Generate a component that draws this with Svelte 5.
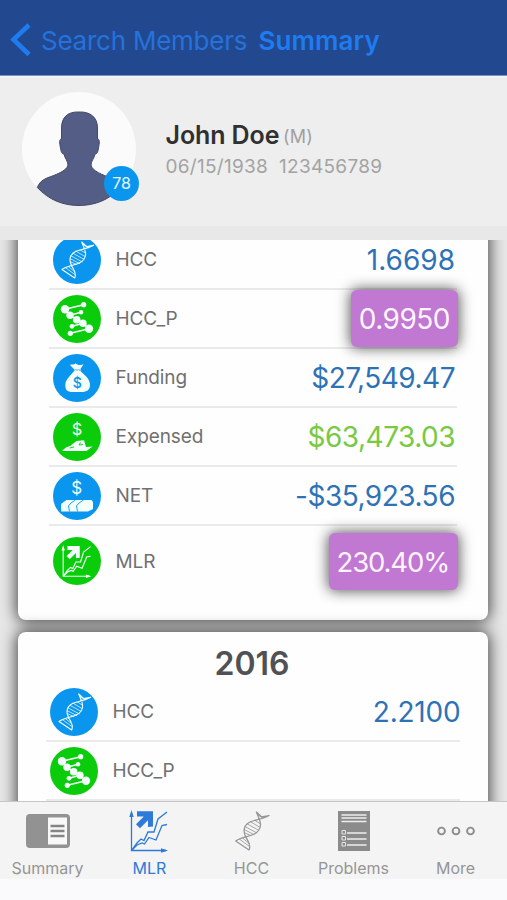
<script>
  const first = [
    { icon: 'dna', label: 'HCC', value: '1.6698', wide: true },
    { icon: 'gene', label: 'HCC_P', value: '0.9950', flag: true },
    { icon: 'bag', label: 'Funding', value: '$27,549.47' },
    { icon: 'hand', label: 'Expensed', value: '$63,473.03', good: true },
    { icon: 'cash', label: 'NET', value: '-$35,923.56' },
    { icon: 'chart', label: 'MLR', value: '230.40%', flag: true, last: true }
  ];
  const second = [
    { icon: 'dna', label: 'HCC', value: '2.2100' },
    { icon: 'gene', label: 'HCC_P', value: '' }
  ];
  const tabs = ['Summary', 'MLR', 'HCC', 'Problems', 'More'];
  const green = ['gene', 'hand', 'chart'];
</script>

{#snippet dna(w)}
  <g fill="none" stroke="currentColor" stroke-width={w} stroke-linecap="round" stroke-linejoin="round">
    <path d="M28.7 6C30 10 33.2 14 32.5 19C31.5 26 25 28 18.5 29.5C15 30.5 11.5 31.5 9 33.5L21.7 42C24 37 20.5 33.5 18.5 29.5C15.5 23.5 17 18 23 15.2C29 13.2 35 12.5 40.7 9.3L33.5 10.5L28.7 6"/>
    <path stroke-width={w * 0.65} d="M23 15.2L32 20.5M20 17.3L31 23.3M18 19.8L29 25.8M17.3 22.7L26.5 27.5M17.5 25.7L23.5 28.4M27 13.8L32.8 17.3M30 8.8L35 11.7M30.5 12L32 13M15.5 30.7L21.8 35.8M12.5 31.7L22.3 38.8M18 30L20.2 32.3"/>
  </g>
{/snippet}

{#snippet chart(w)}
  <g fill="none" stroke="currentColor" stroke-width={w}>
    <path d="M3.5 4V41.5H38"/>
    <path d="M4 41L9 34L13 30L16 31.5L20 23H26L30 10L39 3"/>
    <path d="M4 41L9 36L14 34L16.5 35L21 28.5L28 31L34 16.5L39 15.5"/>
  </g>
  <path fill="currentColor" d="M3.5 1L5.7 8H1.3ZM40 41.5L33 43.7V39.3ZM9 2.3H25V17.5L20 18V11.2L12 19.3L8 15.3L15.8 7.5H9Z"/>
{/snippet}

{#snippet rowIcon(kind)}
  <svg class="icon" class:green={green.includes(kind)} viewBox="0 0 48 48" width="48" height="48">
    {#if kind === 'dna'}
      {@render dna(1.1)}
    {:else if kind === 'gene'}
      <path stroke="currentColor" stroke-width="1.5" fill="none" d="M12 14.3L30.7 9.7M17 20.3L28 17.3M19 31.3L30 28.3M17.3 38.3L36 33.7M12 14.3L17 20.3L23.7 24.7L30 28.3L36 33.7"/>
      <g fill="currentColor">
        <circle cx="12" cy="14.3" r="4.2"/><circle cx="17" cy="20.3" r="3.7"/><circle cx="23.7" cy="24.7" r="3.8"/><circle cx="30" cy="28.3" r="3.7"/><circle cx="36" cy="33.7" r="4.2"/>
        <circle cx="30.7" cy="9.7" r="2.6"/><circle cx="28" cy="17.3" r="2.3"/><circle cx="19" cy="31.3" r="2.4"/><circle cx="17.3" cy="38.3" r="2.6"/>
      </g>
    {:else if kind === 'bag'}
      <path fill="currentColor" d="M17 11C19 9.5 20.5 11.5 22.5 9.2C24 11 27.5 11.5 30.5 10.3L27.3 15.2H21ZM21 17H27.5C30 20 37 24 37 31C37 36 33.5 38 29 38H19C14.5 38 12.3 36 12.3 31C12.3 25 18.5 21 21 17Z"/>
      <path stroke="currentColor" fill="none" d="M21 16H28M23 16L21 20M25 16L27 20"/>
      <text x="24.3" y="34" font-size="14" font-weight="500" text-anchor="middle" fill="#0a96ef">$</text>
    {:else if kind === 'hand'}
      <text x="24" y="22" font-size="16.5" text-anchor="middle" fill="currentColor">$</text>
      <path fill="currentColor" d="M9.3 37.5L13 34.5L17 33L23.5 28L31 27.3L33 34L39.5 33.5L33.5 38H10Z"/>
      <path class="cut" fill="none" stroke-width=".9" d="M27.5 29.5L26 32L30 31.5M16.5 35L21 34"/>
    {:else if kind === 'cash'}
      <text x="23.7" y="22" font-size="17" text-anchor="middle" fill="currentColor">$</text>
      <path fill="currentColor" d="M8 32L13.5 28H38.5L40 30V37L35 39.5H8.3Z"/>
      <path stroke="#0a96ef" stroke-width=".9" fill="none" d="M16.5 39.5L15.5 34L18 31L22.5 28M24.5 39.5L23.5 34L26 31L30.5 28"/>
    {:else}
      <g transform="translate(7.5 7.3) scale(.77)">{@render chart(1.5)}</g>
    {/if}
  </svg>
{/snippet}

{#snippet row(r)}
  <div class="row" class:last={r.last}>
    {@render rowIcon(r.icon)}
    <span class="label">{r.label}</span>
    {#if r.value}
      <span class="value" class:flag={r.flag} class:good={r.good} class:percent={r.last} class:wide={r.wide}>{r.value}</span>
    {/if}
  </div>
{/snippet}

<div class="screen">
  <header>
    <svg width="23" height="34" viewBox="0 0 23 34"><path d="M20 2L4.5 16.5L20 31.5" fill="none" stroke="#1f7cf0" stroke-width="4.6"/></svg>
    <span class="back">Search Members</span>
    <span class="title">Summary</span>
  </header>

  <section class="profile">
    <div class="avatar">
      <svg width="114" height="114" viewBox="0 0 114 114">
        <circle cx="57" cy="57" r="57" fill="#fbfbfb"/>
        <path fill="#545d85" stroke="#45496a" stroke-width="1" d="M57 20C46 19.5 39.5 25 39.5 36V47C37 47 37.5 51 38.5 56C39 60 40 62 42 62C42.5 66 46 69 46 73C45 79 33 83 25 86C20 88 17 91 15.3 95.5C27 108 41 113.5 57 113.5S87 108 98.7 95.5C97 91 94 88 89 86C81 83 70 79 69 73C69 69 72.5 66 73 62C75 62 76 60 76.5 56C77.5 51 78 47 75.5 47V36C75.5 25 68 19.5 57 20Z"/>
      </svg>
      <span class="badge">78</span>
    </div>
    <div class="who">
      <div class="line"><span class="name">John Doe</span><span class="sex">(M)</span></div>
      <div class="ids"><span>06/15/1938</span><span>123456789</span></div>
    </div>
  </section>

  <main>
    <div class="card one">
      {#each first as r}{@render row(r)}{/each}
    </div>
    <div class="card two">
      <h2>2016</h2>
      {#each second as r}{@render row(r)}{/each}
    </div>
  </main>

  <nav>
    {#each tabs as t}
      <div class="tab" class:active={t === 'MLR'}>
        <div class="glyph">
          {#if t === 'Summary'}
            <svg width="46" height="36" viewBox="0 0 46 36"><rect x="1" y="1" width="44" height="34" rx="4" fill="#929292"/><path d="M23 4.5H42V31.5H23Z" fill="#f8f8f8"/><path d="M25.5 13H39.5M25.5 18H39.5M25.5 23H39.5" stroke="#858585" stroke-width="2.3"/></svg>
          {:else if t === 'MLR'}
            <svg width="42" height="44" viewBox="0 0 42 44">{@render chart(1.3)}</svg>
          {:else if t === 'HCC'}
            <svg width="36" height="40" viewBox="7.5 5 34 38">{@render dna(1.2)}</svg>
          {:else if t === 'Problems'}
            <svg width="32" height="42" viewBox="0 0 32 42"><path d="M0 1H32V41H0Z" fill="#8b8b8b"/><path d="M3.5 5H28.5M3.5 8H28.5M3.5 11.5H28.5M9 23H28.5M9 29H28.5M9 35H28.5" stroke="#eee" stroke-width="1.4"/><path d="M4 20.5H7.5V24H4ZM4 26.5H7.5V30H4ZM4 32.5H7.5V36H4Z" fill="none" stroke="#e5e5e5"/></svg>
          {:else}
            <svg width="38" height="12" viewBox="0 0 38 12"><g fill="none" stroke="#8c8c8c" stroke-width="1.9"><circle cx="4.5" cy="6" r="3.4"/><circle cx="19" cy="6" r="3.4"/><circle cx="33.5" cy="6" r="3.4"/></g></svg>
          {/if}
        </div>
        <span>{t}</span>
      </div>
    {/each}
  </nav>
</div>

<style>
  :global(body) { margin: 0; }
  .screen {
    width: 507px; height: 900px; display: flex; flex-direction: column; overflow: hidden;
    background: #fafafc; font-family: Inter, "Liberation Sans", sans-serif;
  }
  header {
    height: 76px; box-sizing: border-box; border-bottom: 1px solid #7f93bd; flex: none;
    background: #22498f; display: flex; align-items: center; padding: 5px 0 0 9px;
    font-size: 26px; white-space: nowrap;
  }
  header svg { margin-right: 9px; flex: none; }
  .back { color: #2572dc; width: 217.5px; letter-spacing: -.24px; }
  .title { color: #1f7cf0; font-weight: 600; letter-spacing: .1px; }
  .profile {
    height: 164px; box-sizing: border-box; flex: none; display: flex; padding: 14px 22px 0;
    border-top: 2px solid #f3f4f8; border-bottom: 14px solid #e8e8e8; background: #eee;
  }
  .avatar { position: relative; width: 114px; height: 114px; }
  .badge {
    position: absolute; left: 82px; top: 74px; width: 35px; height: 35px; border-radius: 50%;
    background: #0a96ef; color: #e8f6ff; font-size: 16px; line-height: 35px; text-align: center;
  }
  .who { margin-left: 29.5px; padding-top: 26px; }
  .line { display: flex; align-items: baseline; line-height: 34px; height: 35px; white-space: nowrap; }
  .name { font-size: 25px; font-weight: 600; color: #303030; letter-spacing: -.1px; }
  .sex { font-size: 18px; color: #a0a0a0; margin-left: 3.5px; letter-spacing: .3px; position: relative; top: -1.5px; }
  .ids { display: flex; gap: 11px; font-size: 19px; letter-spacing: .28px; line-height: 28px; color: #a3a3a3; white-space: nowrap; }
  main { flex: none; height: 561px; overflow: hidden; background: #e7e7e7; }
  .card { width: 470px; margin-left: 18px; box-sizing: border-box; border-radius: 8px; background: #fefefe; box-shadow: 0 0 15px 2px rgba(0, 0, 0, .68); }
  .one { margin-top: -30px; height: 410px; padding: 21px 31px 0; }
  .two { position: relative; margin-top: 12px; height: 300px; padding: 0 28px; }
  h2 { margin: 0 2px 0 0; height: 51px; padding-top: 15px; box-sizing: border-box; line-height: 34px; font-size: 32px; font-weight: 600; text-align: center; color: #505154; }
  .row { height: 59px; box-sizing: border-box; border-bottom: 2px solid #eaeaea; display: flex; align-items: center; padding-left: 4px; }
  .row.last { height: 70px; border: 0; }
  .icon { flex: none; border-radius: 50%; background: #0a96ef; color: #f2fffa; }
  .icon.green { background: #0bcc0b; }
  .cut { stroke: #0bcc0b; }
  .label { margin-left: 14.5px; font-size: 19px; color: #707070; flex: 1; letter-spacing: -.08px; }
  .value { font-size: 28px; color: #2e72b6; padding-right: 2px; white-space: nowrap; letter-spacing: -.5px; }
  .value.wide { letter-spacing: 0; }
  .two .value { padding-right: 0; margin-right: -.5px; letter-spacing: -.2px; }
  .value.good { color: #79c943; }
  .value.flag { height: 57px; line-height: 58px; padding: 0 8px; margin-right: -1px; border-radius: 6px; background: #c078d3; color: #fff4ff; box-shadow: 0 0 14px 1px rgba(0, 0, 0, .65); }
  .value.percent { font-size: 27.5px; letter-spacing: -1.15px; padding-right: 9px; }
  nav { height: 78px; flex: none; box-sizing: border-box; border-top: 1px solid #c6c6c6; background: #f4f4f4; display: flex; }
  .tab { width: 102px; flex: none; display: flex; flex-direction: column; align-items: center; color: #969696; margin-left: -3.5px; margin-right: 3.5px; }
  .glyph { height: 56px; display: flex; align-items: center; padding-top: 1px; }
  .glyph svg { display: block; }
  .tab span { margin-top: -1px; font-size: 16px; line-height: 22px; }
  .active { color: #2d7ad9; }
  .active svg { margin-left: -2px; }
</style>
